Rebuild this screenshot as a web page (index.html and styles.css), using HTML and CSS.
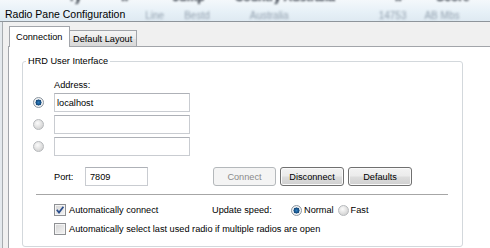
FILE: index.html
```html
<!DOCTYPE html>
<html>
<head>
<meta charset="utf-8">
<link rel="stylesheet" href="styles.css">
</head>
<body>
<div class="titlebar">
  <div class="ghost-top">
    <span class="g1">ry</span><span class="g2">IP</span><span class="g3">Jump</span><span class="g4">Country Australia</span><span class="g5">IP</span><span class="g6">Score</span>
  </div>
  <div class="title-row">
    <span class="title">Radio Pane Configuration</span>
    <span class="ghost g7">Line</span><span class="ghost g8">Bestd</span><span class="ghost g9">Australia</span><span class="ghost g10">14753</span><span class="ghost g11">AB Mbs</span>
  </div>
</div>
<div class="window">
  <div class="tabs">
    <div class="tab active">Connection</div>
    <div class="tab">Default Layout</div>
  </div>
  <div class="pane">
    <fieldset class="group">
      <legend>HRD User Interface</legend>
      <div class="inner">
        <div class="addr-label">Address:</div>
        <div class="addr-grid">
          <span class="radio on"></span><div class="textbox">localhost</div>
          <span class="radio"></span><div class="textbox"></div>
          <span class="radio"></span><div class="textbox"></div>
        </div>
        <div class="port-row">
          <span class="port-label">Port:</span>
          <div class="textbox port">7809</div>
          <div class="buttons">
            <div class="btn disabled">Connect</div>
            <div class="btn">Disconnect</div>
            <div class="btn">Defaults</div>
          </div>
        </div>
        <div class="separator"></div>
        <div class="check-row">
          <div class="check-item first">
            <span class="checkbox"><svg width="10" height="10" viewBox="0 0 10 10"><path d="M1.8 4.8 L4 7.6 L8.4 1.8" fill="none" stroke="#2b4e8c" stroke-width="1.7"/></svg></span>
            <span>Automatically connect</span>
          </div>
          <span class="update-label">Update speed:</span>
          <span class="radio on"></span><span class="opt">Normal</span>
          <span class="radio"></span><span class="opt">Fast</span>
        </div>
        <div class="check-row second">
          <div class="check-item">
            <span class="checkbox"></span>
            <span>Automatically select last used radio if multiple radios are open</span>
          </div>
        </div>
      </div>
    </fieldset>
  </div>
</div>
</body>
</html>
```
FILE: styles.css
```css
* { box-sizing: border-box; }
html, body { margin: 0; padding: 0; }
body {
  width: 490px;
  height: 248px;
  overflow: hidden;
  background: #e4e9ed;
  font-family: "Liberation Sans", Arial, sans-serif;
  font-size: 9.2px;
  color: #000;
}

/* title bar (Aero glass with blurred window behind) */
.titlebar {
  height: 22px;
  background: linear-gradient(#f4f8fb, #e6f0f7 60%, #dfeaf2);
  border-bottom: 1px solid #8e959b;
  overflow: hidden;
  display: flex;
  flex-direction: column;
}
.ghost-top {
  height: 3px;
  display: flex;
  align-items: flex-end;
  white-space: nowrap;
  font-size: 12px;
  font-weight: bold;
  line-height: 12px;
  color: #1c2430;
  filter: blur(0.9px);
}
.ghost-top span { display: block; }
.g1 { margin-left: 70px; }
.g2 { margin-left: 40px; }
.g3 { margin-left: 40px; }
.g4 { margin-left: 30px; }
.g5 { margin-left: 60px; }
.g6 { margin-left: 30px; }
.title-row {
  height: 18px;
  padding-top: 3px;
  display: flex;
  align-items: center;
  padding-left: 5px;
  white-space: nowrap;
}
.title {
  font-size: 10.5px;
  color: #000;
}
.ghost {
  font-size: 10px;
  color: #94a2b0;
  filter: blur(1.2px);
  margin-top: 3px;
}
.g7 { margin-left: 20px; }
.g8 { margin-left: 20px; }
.g9 { margin-left: 40px; }
.g10 { margin-left: 90px; }
.g11 { margin-left: 18px; }

/* window body */
.window {
  height: 226px;
  margin-left: 2px;
  border-left: 1px solid #a7acb0;
  padding-left: 5px;
  background: #f0f0f0;
  display: flex;
  flex-direction: column;
}
.tabs {
  height: 24px;
  display: flex;
  align-items: flex-end;
  padding-left: 1px;
}
.tab {
  height: 16px;
  padding-left: 3px;
  padding-right: 4px;
  display: flex;
  align-items: center;
  border: 1px solid #a2a5aa;
  border-bottom: none;
  background: linear-gradient(#f4f4f4, #ebebeb 50%, #e0e0e0 51%, #d9d9d9);
  margin-left: -1px;
  white-space: nowrap;
}
.tab.active {
  height: 21px;
  width: 61px;
  padding-left: 6px;
  padding-bottom: 1px;
  margin-left: 0;
  margin-bottom: -1px;
  background: #fff;
  position: relative;
  z-index: 1;
}
.pane {
  flex: 1;
  background: #fff;
  border-top: 1px solid #a2a5aa;
  border-left: 1px solid #a2a5aa;
  padding: 8px 0 0 13px;
}

/* group box */
.group {
  margin: 0;
  padding: 0 0 10px 0;
  width: 441px;
  min-width: 0;
  border: 1px solid #d3d8dc;
  border-radius: 3px;
}
.group legend {
  margin-left: 3px;
  padding: 0 2px;
  line-height: 12px;
  font-size: 9.2px;
}
.inner {
  padding-left: 10px;
  display: flex;
  flex-direction: column;
}
.addr-label {
  margin-top: 12px;
  margin-left: 21px;
  line-height: 12px;
}
.addr-grid {
  margin-top: 2px;
  display: grid;
  grid-template-columns: 21px 136px;
  grid-auto-rows: 19px;
  row-gap: 3px;
  align-items: center;
}
.textbox {
  height: 19px;
  border: 1px solid #c9ccd1;
  border-top-color: #aeb1b7;
  background: #fff;
  padding-left: 2px;
  display: flex;
  align-items: center;
}
.radio {
  width: 11px;
  height: 11px;
  border-radius: 50%;
  border: 1px solid #b6b9bc;
  background: radial-gradient(circle at 40% 35%, #fbfbfb 0, #e8e8e8 3px, #d4d4d4 6px);
  flex: none;
}
.radio.on {
  border-color: #8d97a1;
  background: radial-gradient(circle at 50% 50%, #2f7fbf 0, #1b5b94 1.8px, #0e3f6e 2.8px, #d8e4ee 3.2px, #f6f6f6 3.8px, #dcdcdc 5.5px);
}
.port-row {
  margin-top: 11px;
  margin-left: 21px;
  display: flex;
  align-items: center;
  height: 19px;
}
.port-label { width: 31px; }
.textbox.port { width: 63px; padding-left: 4px; }
.buttons {
  margin-left: 65px;
  display: flex;
  gap: 4px;
}
.btn {
  height: 19px;
  width: 64px;
  border: 1px solid #707070;
  border-radius: 3px;
  background: linear-gradient(#f3f3f3, #ebebeb 48%, #dddddd 52%, #cfcfcf);
  box-shadow: inset 0 0 0 1px #fafafa;
  display: flex;
  align-items: center;
  justify-content: center;
}
.btn.disabled {
  width: 63px;
  border-color: #b4b8bb;
  background: #f4f4f4;
  box-shadow: none;
  color: #8a8a8a;
}
.separator {
  margin: 8px 14px 0 3px;
  border-top: 1px solid #a6a6a6;
}
.check-row {
  margin-top: 8px;
  margin-left: 21px;
  height: 14px;
  display: flex;
  align-items: center;
  white-space: nowrap;
}
.check-row.second { margin-top: 5px; }
.check-item {
  display: flex;
  align-items: center;
  gap: 3px;
}
.check-item.first { width: 158px; }
.checkbox {
  width: 12px;
  height: 12px;
  border: 1px solid #8f9194;
  background: linear-gradient(135deg, #d4d4d4, #f4f4f4);
  box-shadow: inset 0 0 0 1px #f4f4f4;
  display: flex;
  align-items: center;
  justify-content: center;
}
.checkbox svg { display: block; }
.update-label { width: 79px; }
.opt { margin-left: 2px; margin-right: 4px; }
```
